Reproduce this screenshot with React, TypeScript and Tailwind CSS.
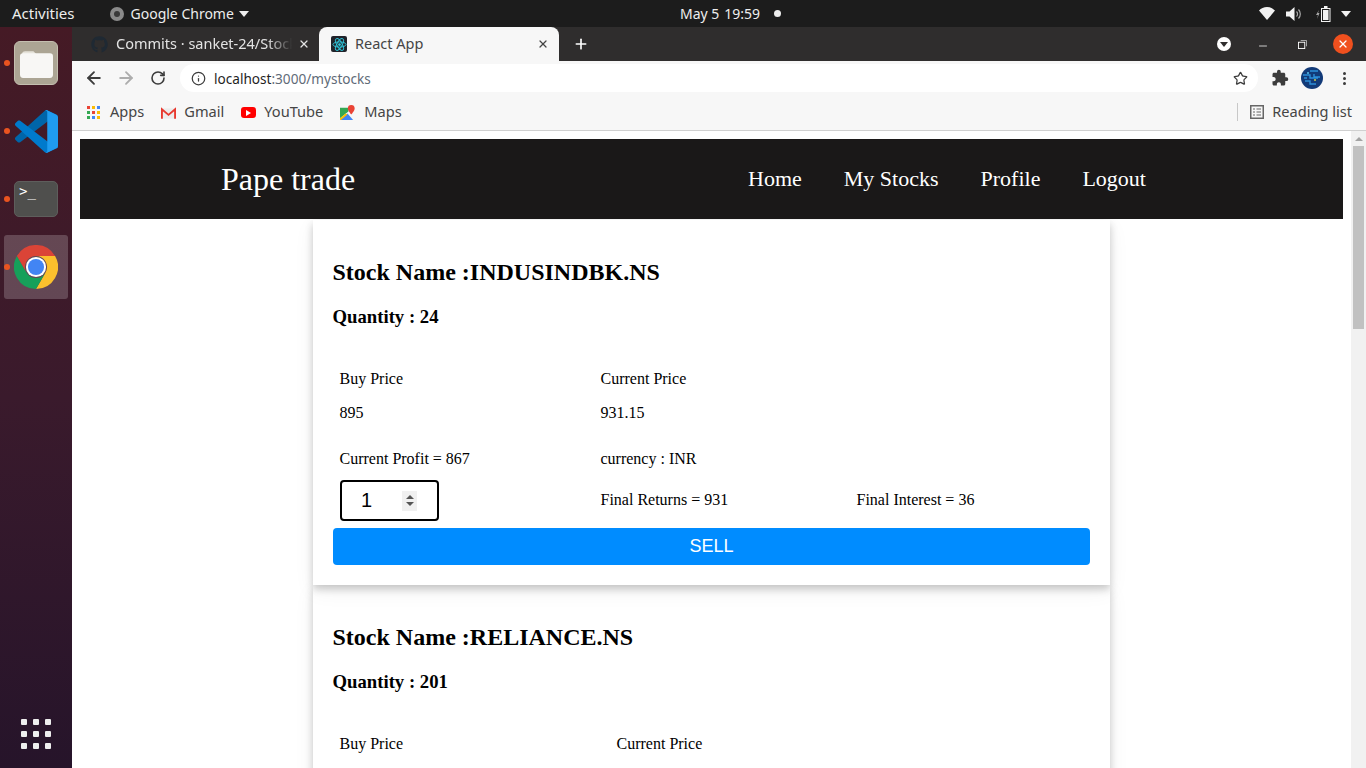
import { ArrowLeft, ArrowRight, Info, Minus, Plus, RotateCw, Star, X } from "lucide-react";
import { FaGithub } from "react-icons/fa";
import { MdExtension } from "react-icons/md";

function VsCodeIcon() {
  return (
    <svg viewBox="0 0 100 100" className="w-[43px] h-[43px]">
      <path fill="#0065A9" d="M96.4614 10.7962L75.8569 0.875542C73.4719 -0.272773 70.6217 0.211611 68.75 2.08333L1.29858 63.5832C-0.515693 65.2373 -0.513607 68.0937 1.30308 69.7452L6.81272 74.754C8.29793 76.1042 10.5347 76.2036 12.1338 74.9905L93.3609 13.3699C96.086 11.3026 100 13.2462 100 16.6667V16.4275C100 14.0265 98.6246 11.8378 96.4614 10.7962Z" />
      <path fill="#007ACC" d="M96.4614 89.2038L75.8569 99.1245C73.4719 100.273 70.6217 99.7884 68.75 97.9167L1.29858 36.4169C-0.515693 34.7627 -0.513607 31.9063 1.30308 30.2548L6.81272 25.246C8.29793 23.8958 10.5347 23.7964 12.1338 25.0095L93.3609 86.6301C96.086 88.6974 100 86.7538 100 83.3333V83.5725C100 85.9735 98.6246 88.1622 96.4614 89.2038Z" />
      <path fill="#1F9CF0" d="M75.8578 99.1263C73.4721 100.274 70.6219 99.7885 68.75 97.9166C71.0564 100.223 75 98.5895 75 95.3278V4.67213C75 1.41039 71.0564 -0.223106 68.75 2.08329C70.6219 0.211402 73.4721 -0.273666 75.8578 0.873633L96.4587 10.7807C98.6234 11.8217 100 14.0112 100 16.4132V83.5871C100 85.9891 98.6234 88.1786 96.4586 89.2196L75.8578 99.1263Z" />
    </svg>
  );
}

function ChromeIcon() {
  return (
    <svg viewBox="0 0 48 48" className="w-[44px] h-[44px]">
      <path fill="#FBC02D" d="M44.8 12A24 24 0 0 1 24 48L34.4 30A12 12 0 0 0 24 12Z" />
      <path fill="#16A05A" d="M3.2 12A24 24 0 0 0 24 48L34.4 30A12 12 0 0 1 13.6 30Z" />
      <path fill="#DB4437" d="M3.2 12A24 24 0 0 1 44.8 12H24A12 12 0 0 0 13.6 30Z" />
      <circle cx="24" cy="24" r="11" fill="#fff" />
      <circle cx="24" cy="24" r="8.8" fill="#4285F4" />
    </svg>
  );
}

function DockSlot({ children, active }: { children: React.ReactNode; active?: boolean }) {
  return (
    <div className="relative w-full h-[68px] flex items-center justify-center">
      {active && <div className="absolute left-[4px] top-[2px] w-[64px] h-[64px] rounded-[3px] bg-white/20" />}
      <span className="absolute left-[4px] top-[31px] w-[6px] h-[6px] rounded-full bg-[#e95420] z-10" />
      <div className="relative flex">{children}</div>
    </div>
  );
}

function Dock() {
  return (
    <aside className="w-[72px] shrink-0 flex flex-col pt-[2px] bg-gradient-to-b from-[#451a25] via-[#3a1a2c] to-[#26142a]">
      <DockSlot>
        <div className="w-[44px] h-[44px] rounded-[6px] bg-[#aca594] border border-[#c4bfb0] flex items-center justify-center">
          <svg viewBox="0 0 32 28" className="w-[33px] h-[29px]">
            <path fill="#e6e3da" d="M2 5a3 3 0 0 1 3-3h8l3 3v4H2Z" />
            <rect x="0" y="4" width="32" height="24" rx="3" fill="#f8f7f5" />
          </svg>
        </div>
      </DockSlot>
      <DockSlot>
        <VsCodeIcon />
      </DockSlot>
      <DockSlot>
        <div className="w-[44px] h-[36px] rounded-[5px] bg-[#4f4f4d] border border-[#5e5e5c] flex items-start pl-[4px] pt-[1px]">
          <span className="text-white text-[14px] leading-[16px] [font-family:'DejaVu_Sans_Mono',monospace]">&gt;_</span>
        </div>
      </DockSlot>
      <DockSlot active>
        <ChromeIcon />
      </DockSlot>
      <div className="mt-auto mb-[19px] mx-auto grid grid-cols-3 gap-[6px]">
        {Array.from({ length: 9 }).map((_, i) => (
          <span key={i} className="w-[6px] h-[6px] rounded-[1px] bg-[#eeeeee]" />
        ))}
      </div>
    </aside>
  );
}

function TopBar() {
  return (
    <header className="relative h-[27px] shrink-0 bg-[#1c1c1c] flex items-center text-[#ededed] text-[14px] [font-family:'Noto_Sans',sans-serif]">
      <span className="ml-[12px] text-[15px]">Activities</span>
      <span className="ml-[35px] w-[14px] h-[14px] rounded-full bg-[#8a8a8a] flex items-center justify-center">
        <span className="w-[6px] h-[6px] rounded-full bg-[#3a3a3a]" />
      </span>
      <span className="ml-[7px]">Google Chrome</span>
      <svg viewBox="0 0 10 6" className="w-[10px] h-[6px] ml-[5px]"><path fill="#ededed" d="M0 0h10L5 6Z" /></svg>
      <div className="absolute left-[680px] top-0 h-full flex items-center">
        <span>May 5</span>
        <span className="ml-[5px]">19:59</span>
        <span className="ml-[14px] w-[7px] h-[7px] rounded-full bg-[#ededed]" />
      </div>
      <div className="ml-auto flex items-center mr-[15px]">
        <svg viewBox="0 0 16 13" className="w-[16px] h-[13px]"><path fill="#f2f2f2" d="M8 13 0 3.6C2 1.4 4.8 0 8 0s6 1.4 8 3.6Z" /></svg>
        <svg viewBox="0 0 16 14" className="w-[16px] h-[14px] ml-[11px]">
          <path fill="#f2f2f2" d="M0 4.5h3.5L8.5 0v14l-5-4.5H0Z" />
          <path fill="none" stroke="#a8a8a8" strokeWidth="1.2" d="M10.5 4.5a3.5 3.5 0 0 1 0 5M12.5 2.5a6.5 6.5 0 0 1 0 9" />
        </svg>
        <svg viewBox="0 0 16 16" className="w-[16px] h-[16px] ml-[13px]">
          <path fill="#a8a8a8" d="M4 4 1 9h2l-1 4 2.5-6H3l1-3Z" />
          <rect x="6.5" y="2.5" width="8.5" height="13" fill="none" stroke="#f2f2f2" />
          <rect x="8" y="4" width="5.5" height="10" fill="#f2f2f2" />
          <rect x="9" y="0" width="3.5" height="2" fill="#f2f2f2" />
        </svg>
        <svg viewBox="0 0 10 6" className="w-[10px] h-[6px] ml-[10px]"><path fill="#f2f2f2" d="M0 0h10L5 6Z" /></svg>
      </div>
    </header>
  );
}

function ReactFavicon() {
  return (
    <span className="w-[16px] h-[16px] rounded-[2px] bg-[#20232a] flex items-center justify-center">
      <svg viewBox="-12 -12 24 24" className="w-[15px] h-[15px]">
        <circle r="2.2" fill="#2fc4d9" />
        <g fill="none" stroke="#2fc4d9" strokeWidth="1.5">
          <ellipse rx="10.5" ry="4.2" />
          <ellipse rx="10.5" ry="4.2" transform="rotate(60)" />
          <ellipse rx="10.5" ry="4.2" transform="rotate(120)" />
        </g>
      </svg>
    </span>
  );
}

function TabStrip() {
  return (
    <div className="h-[34px] shrink-0 bg-[#2f2d2d] flex items-stretch text-[14.5px] [font-family:'Noto_Sans',sans-serif]">
      <div className="w-[247px] flex items-center pl-[19px]">
        <FaGithub className="w-[17px] h-[17px] text-[#1f2933]" />
        <span className="ml-[8px] -mt-[1px] w-[180px] whitespace-nowrap overflow-hidden text-[#e3e3e3] [mask-image:linear-gradient(to_right,black_84%,transparent_98%)]">
          Commits · sanket-24/Stock
        </span>
        <X className="ml-[2px] w-[12px] h-[12px] text-[#e3e3e3]" strokeWidth={2.5} />
      </div>
      <div className="relative w-[240px] bg-[#f7f7f7] rounded-t-[8px] flex items-center pl-[12px] text-[#454545]">
        <ReactFavicon />
        <span className="ml-[8px] -mt-[1px]">React App</span>
        <X className="ml-auto mr-[10px] w-[12px] h-[12px] text-[#454545]" strokeWidth={2.5} />
      </div>
      <div className="ml-[14px] flex items-center">
        <Plus className="w-[16px] h-[16px] text-white" strokeWidth={2.5} />
      </div>
      <div className="ml-auto flex items-center">
        <span className="w-[14px] h-[14px] rounded-full bg-white flex items-center justify-center">
          <svg viewBox="0 0 8 5" className="w-[8px] h-[5px]"><path fill="#2f2d2d" d="M0 0h8L4 5Z" /></svg>
        </span>
        <Minus className="ml-[26px] w-[12px] h-[12px] text-white translate-y-[2px]" strokeWidth={1.5} />
        <svg viewBox="0 0 10 10" className="ml-[29px] w-[9px] h-[9px]">
          <rect x="0.5" y="2.5" width="7" height="7" fill="none" stroke="#fff" />
          <path fill="none" stroke="#bbb" d="M3 0.5h6.5V7" />
        </svg>
        <span className="ml-[26px] mr-[13px] w-[20px] h-[20px] rounded-full bg-[#f0501e] flex items-center justify-center">
          <X className="w-[12px] h-[12px] text-white" strokeWidth={2.5} />
        </span>
      </div>
    </div>
  );
}

function AddressBar() {
  return (
    <div className="h-[34px] shrink-0 bg-[#f7f7f7] flex items-center text-[13.6px] [font-family:'Noto_Sans',sans-serif]">
      <ArrowLeft className="ml-[12px] w-[20px] h-[20px] text-[#3c3c3c]" strokeWidth={2.2} />
      <ArrowRight className="ml-[12px] w-[20px] h-[20px] text-[#adadad]" strokeWidth={2.2} />
      <RotateCw className="ml-[14px] w-[16px] h-[16px] text-[#3c3c3c]" strokeWidth={2.4} />
      <div className="ml-[14px] w-[1078px] h-[28px] bg-white rounded-full flex items-center pl-[11px]">
        <Info className="w-[15px] h-[15px] text-[#3c3c3c]" strokeWidth={2} />
        <span className="ml-[8px] mt-[2px] text-[#1f1f1f]">localhost</span>
        <span className="mt-[2px] text-[#5f6b78]">:3000/mystocks</span>
        <Star className="ml-auto mr-[10px] w-[15px] h-[15px] text-[#3c3c3c]" strokeWidth={2} />
      </div>
      <MdExtension className="ml-[13px] w-[18px] h-[18px] text-[#3c3c3c]" />
      <svg viewBox="0 0 22 22" className="ml-[12px] w-[22px] h-[22px]">
        <circle cx="11" cy="11" r="11" fill="#123a78" />
        <path stroke="#2d8fd8" strokeWidth="1.4" fill="none" d="M2 8h7v3h8M4 14h5v3h6M9 4h8M13 7v3h6M3 11h3" />
        <circle cx="14" cy="13" r="1" fill="#c9c94a" />
        <circle cx="7" cy="6" r="1" fill="#58c0e8" />
      </svg>
      <div className="ml-[20px] flex flex-col gap-[2px]">
        <span className="w-[3px] h-[3px] rounded-full bg-[#3c3c3c]" />
        <span className="w-[3px] h-[3px] rounded-full bg-[#3c3c3c]" />
        <span className="w-[3px] h-[3px] rounded-full bg-[#3c3c3c]" />
      </div>
    </div>
  );
}

function BookmarksBar() {
  const appColors = ["#ea4335", "#fbbc04", "#4285f4", "#34a853", "#ea4335", "#fbbc04", "#34a853", "#4285f4", "#fbbc04"];
  return (
    <div className="h-[36px] shrink-0 bg-[#f7f7f7] border-b border-[#d0d0d0] flex items-center text-[14.6px] text-[#454545] [font-family:'Noto_Sans',sans-serif]">
      <div className="ml-[15px] grid grid-cols-3 gap-[2px]">
        {appColors.map((c, i) => (
          <span key={i} className="w-[3px] h-[3px]" style={{ backgroundColor: c }} />
        ))}
      </div>
      <span className="ml-[10px] -mt-[2px]">Apps</span>
      <svg viewBox="0 0 16 12" className="ml-[17px] w-[15px] h-[12px]">
        <path fill="#ececec" d="M1 1h14v11H1Z" />
        <path fill="none" stroke="#e8392f" strokeWidth="2" d="M1 12V2l7 6 7-6v10" />
      </svg>
      <span className="ml-[8px] -mt-[2px]">Gmail</span>
      <span className="ml-[17px] w-[15px] h-[11px] rounded-[3px] bg-[#f00] flex items-center justify-center">
        <svg viewBox="0 0 5 6" className="w-[5px] h-[6px]"><path fill="#fff" d="M0 0v6l5-3Z" /></svg>
      </span>
      <span className="ml-[8px] -mt-[2px]">YouTube</span>
      <svg viewBox="0 0 16 16" className="ml-[17px] w-[15px] h-[15px]">
        <path fill="#34a853" d="M0 3h9v4L0 14Z" />
        <path fill="#4285f4" d="M0 16l8-7 6 7Z" />
        <path fill="#fbbc04" d="M0 14 6 9l2 1-7 6H0Z" />
        <path fill="#ea4335" d="M12 0a3.6 3.6 0 0 1 3.6 3.6C15.6 6 12 10 12 10S8.4 6 8.4 3.6A3.6 3.6 0 0 1 12 0Z" />
      </svg>
      <span className="ml-[9px] -mt-[2px]">Maps</span>
      <div className="ml-auto flex items-center mr-[14px]">
        <span className="w-px h-[18px] bg-[#c8c8c8]" />
        <svg viewBox="0 0 14 14" className="ml-[12px] w-[14px] h-[14px]">
          <rect x="0.75" y="0.75" width="12.5" height="12.5" fill="none" stroke="#666" strokeWidth="1.5" />
          <path stroke="#666" strokeWidth="1.2" d="M3 4h2M6.5 4h4.5M3 7h2M6.5 7h4.5M3 10h2M6.5 10h4.5" />
        </svg>
        <span className="ml-[8px] -mt-[2px]">Reading list</span>
      </div>
    </div>
  );
}

function NavBar() {
  return (
    <nav className="relative z-20 h-[80px] bg-[#1a1818] flex items-center pl-[141px] text-white">
      <span className="w-[527px] text-[32px]">Pape trade</span>
      <div className="-mt-[1px] flex items-center gap-[42px] text-[22px]">
        <span>Home</span>
        <span>My Stocks</span>
        <span>Profile</span>
        <span>Logout</span>
      </div>
    </nav>
  );
}

type Stock = {
  name: string;
  qty: number;
  buy: number;
  current: number;
  profit: number;
  returns: number;
  interest: number;
  grid: string;
  layer: string;
};

function StockCard({ stock }: { stock: Stock }) {
  return (
    <section className={`relative ${stock.layer} mx-auto w-[797px] shrink-0 h-[365px] bg-white shadow-[0_4px_8px_0_rgba(0,0,0,0.2),0_6px_20px_0_rgba(0,0,0,0.06)] px-[20px] pt-[39px]`}>
      <h2 className="-ml-[0.5px] text-[24px] leading-[27px] font-bold text-black">Stock Name :{stock.name}</h2>
      <h3 className="-ml-[0.5px] mt-[20px] text-[18.72px] leading-[22px] font-bold text-black">Quantity : {stock.qty}</h3>
      <div className={`mt-[42px] ml-[6.5px] ${stock.grid} h-[18px] leading-[18px]`}>
        <span>Buy Price</span>
        <span>Current Price</span>
      </div>
      <div className={`mt-[16px] ml-[6.5px] ${stock.grid} h-[18px] leading-[18px]`}>
        <span>{stock.buy}</span>
        <span>{stock.current}</span>
      </div>
      <div className={`mt-[28px] ml-[6.5px] ${stock.grid} h-[18px] leading-[18px]`}>
        <span>Current Profit = {stock.profit}</span>
        <span>currency : INR</span>
      </div>
      <div className={`mt-[12px] ml-[6.5px] ${stock.grid} h-[41px] items-center leading-[18px]`}>
        <div className="ml-[0.5px] w-[99px] h-[41px] border-2 border-black rounded-[4px] flex items-center pl-[19px]">
          <span className="-mt-[2px] text-[20px] [font-family:'Liberation_Sans',sans-serif]">1</span>
          <div className="ml-auto mr-[20px] w-[15px] h-[20px] bg-[#f0f0f0] flex flex-col items-center justify-center gap-[3px]">
            <svg viewBox="0 0 8 4" className="w-[8px] h-[4px]"><path fill="#555" d="M4 0l4 4H0Z" /></svg>
            <svg viewBox="0 0 8 4" className="w-[8px] h-[4px]"><path fill="#555" d="M0 0h8L4 4Z" /></svg>
          </div>
        </div>
        <span className="-translate-y-px">Final Returns = {stock.returns}</span>
        <span className="-translate-y-px">Final Interest = {stock.interest}</span>
      </div>
      <button className="mt-[7px] w-[757px] h-[37px] rounded-[4px] bg-[#008cff] text-white text-[18px] [font-family:'Liberation_Sans',sans-serif]">
        SELL
      </button>
    </section>
  );
}

const stocks: Stock[] = [
  { name: "INDUSINDBK.NS", qty: 24, buy: 895, current: 931.15, profit: 867, returns: 931, interest: 36, grid: "grid grid-cols-[261px_256px_1fr]", layer: "z-10" },
  { name: "RELIANCE.NS", qty: 201, buy: 1950, current: 1960.5, profit: 2110, returns: 1960, interest: 10, grid: "grid grid-cols-[277px_240px_1fr]", layer: "z-0" },
];

export default function App() {
  return (
    <div className="w-[1366px] h-[768px] overflow-hidden flex flex-col bg-white">
      <TopBar />
      <div className="flex-1 flex min-h-0">
        <Dock />
        <div className="flex-1 flex flex-col min-w-0">
          <TabStrip />
          <AddressBar />
          <BookmarksBar />
          <div className="flex-1 flex min-h-0">
            <main className="flex-1 min-w-0 overflow-hidden px-[8px] pt-[8px] text-[16px] text-black [font-family:'Liberation_Serif',serif]">
              <NavBar />
              <div className="flex flex-col mt-[1px]">
                {stocks.map((s) => (
                  <StockCard key={s.name} stock={s} />
                ))}
              </div>
            </main>
            <div className="w-[15px] shrink-0 bg-[#f1f1f1] flex flex-col items-center pt-[6px]">
              <svg viewBox="0 0 8 4" className="w-[8px] h-[4px]"><path fill="#a3a3a3" d="M4 0l4 4H0Z" /></svg>
              <div className="mt-[5px] w-[11px] h-[183px] bg-[#c1c1c1]" />
            </div>
          </div>
        </div>
      </div>
    </div>
  );
}
